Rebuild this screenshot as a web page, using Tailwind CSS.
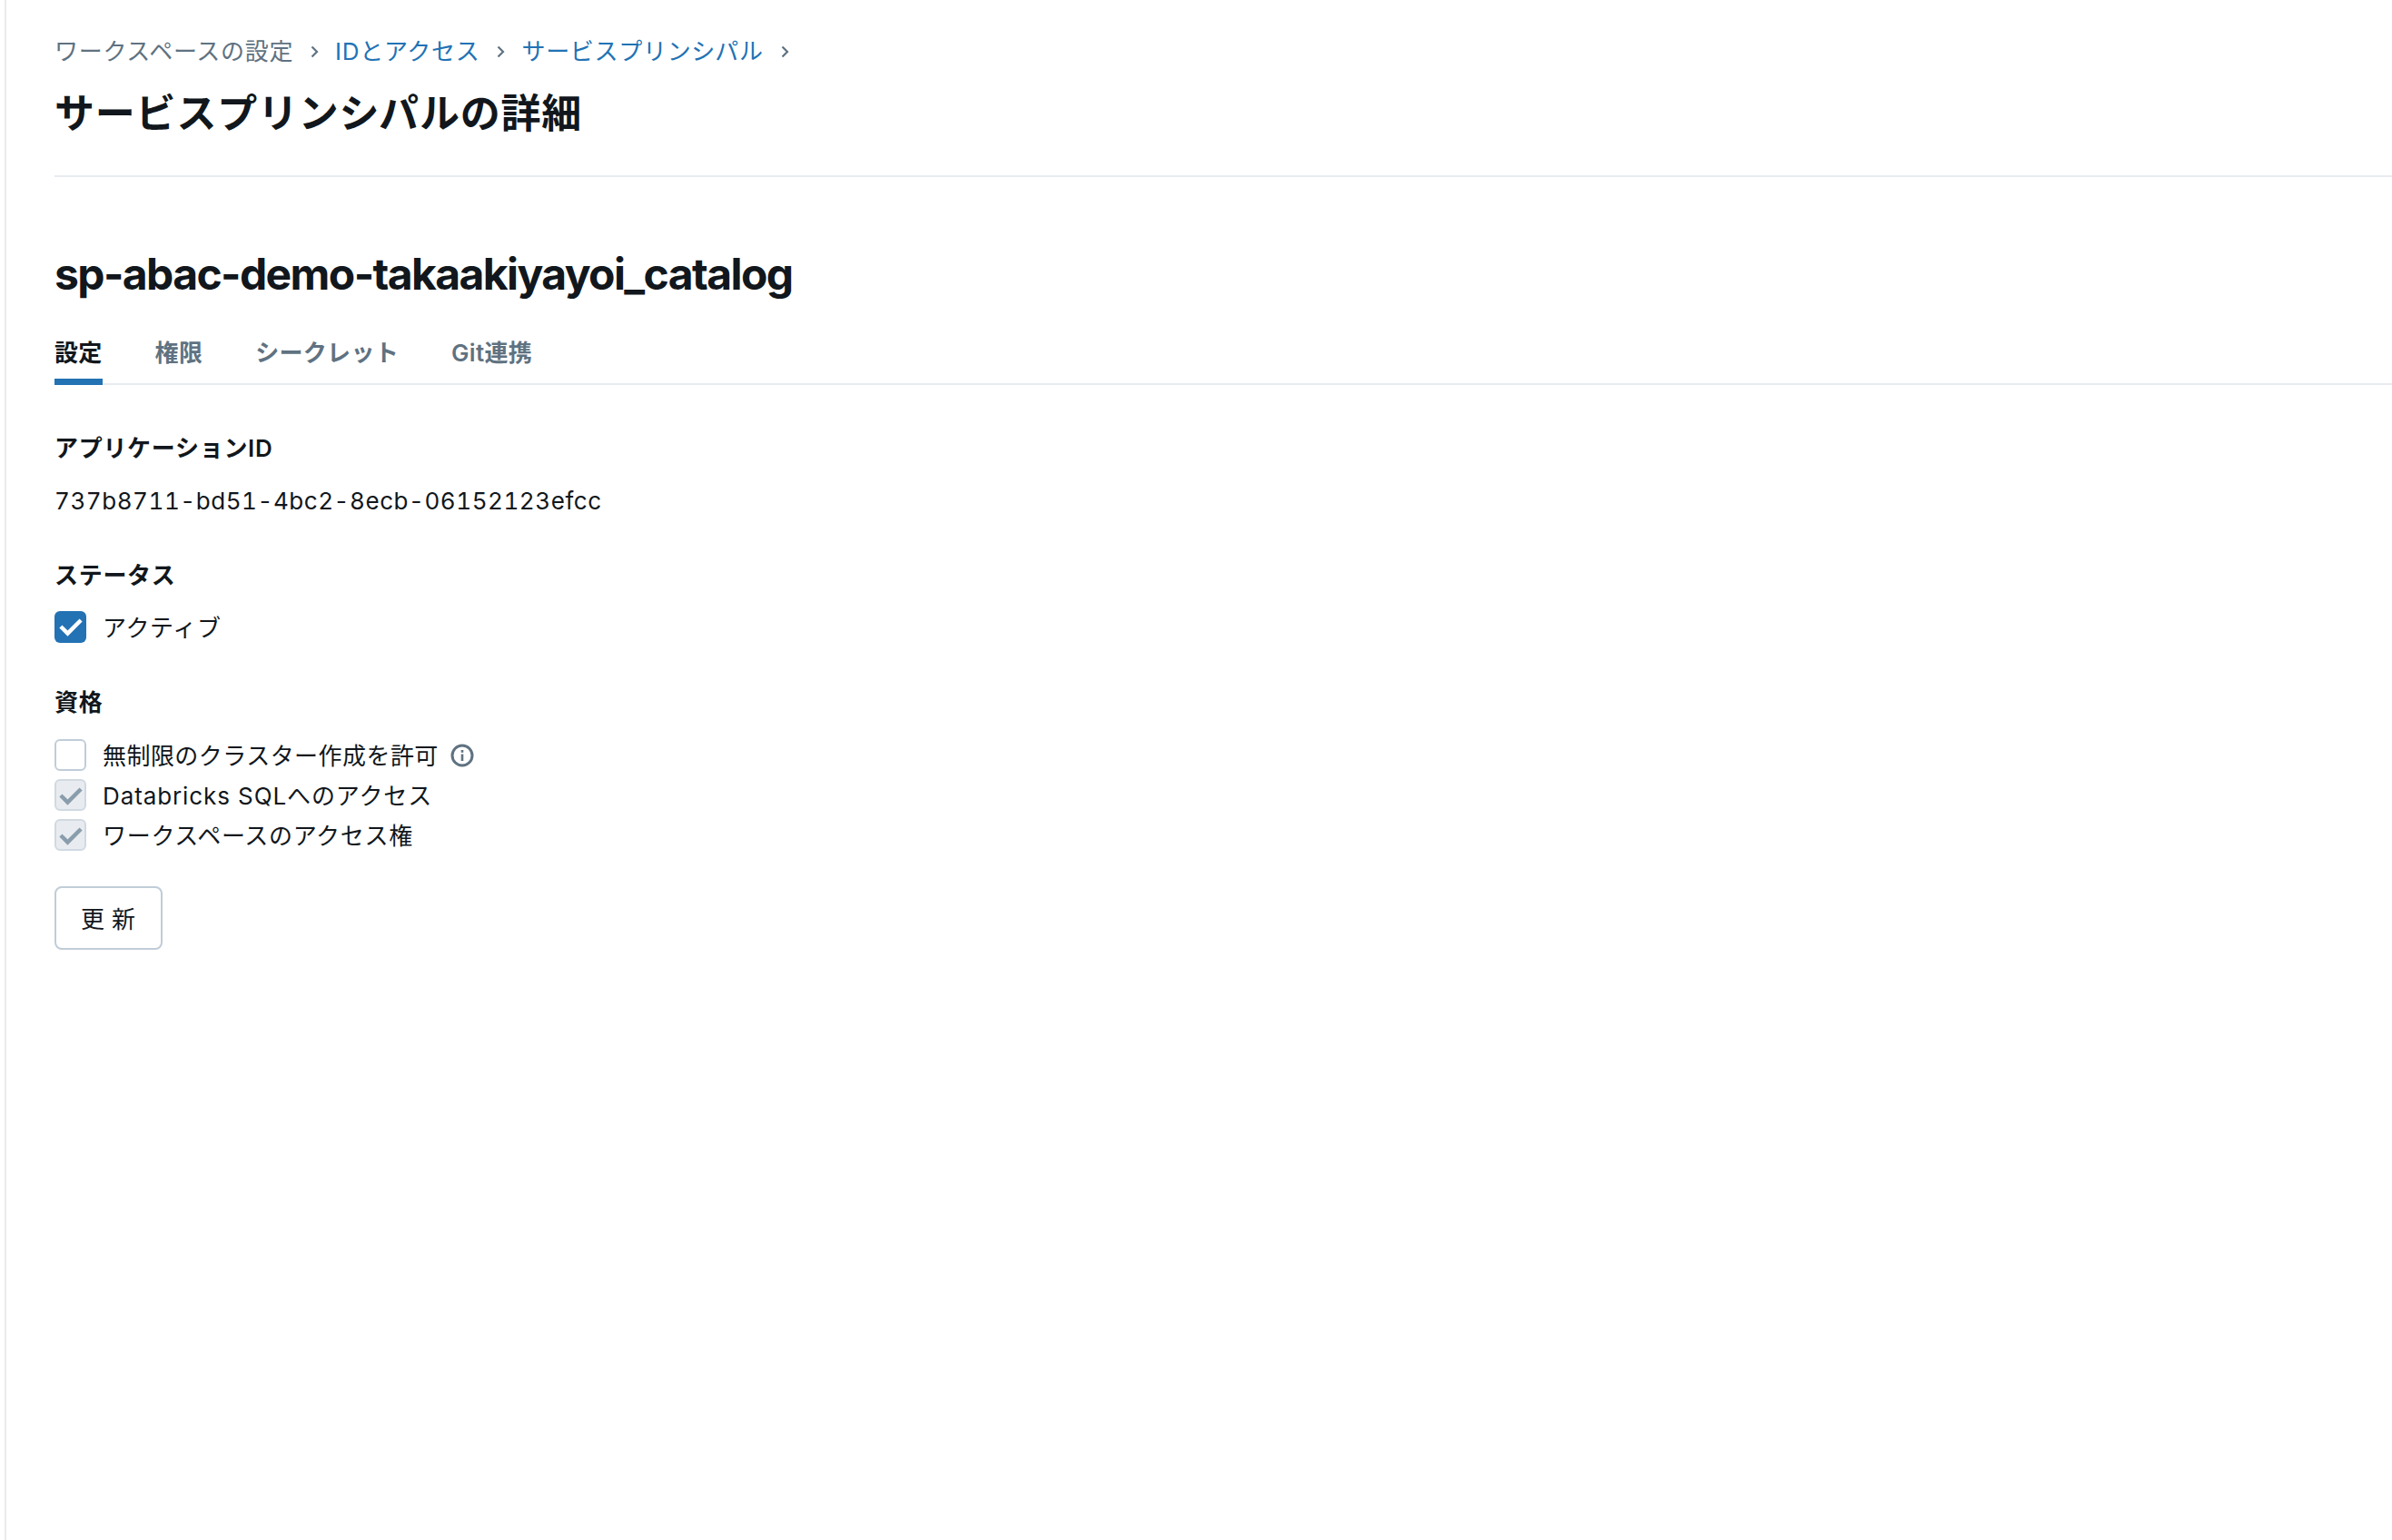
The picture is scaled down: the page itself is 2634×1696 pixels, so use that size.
<!DOCTYPE html>
<html lang="ja">
<head>
    <meta charset="UTF-8">
    <title>サービスプリンシパルの詳細</title>
    <script src="https://cdn.jsdelivr.net/npm/@tailwindcss/browser@4"></script>
</head>
<body class="bg-white text-[#11171c] font-['Inter','Noto_Sans_CJK_JP',sans-serif] text-[26px] tracking-[0.7px]">
    <div class="ml-[5px] min-h-screen border-l-[2px] border-[#e8ecf0] pl-[53px]">
        <!-- breadcrumb + page title -->
        <nav class="flex items-center pt-[38px] h-[76px] leading-[38px]">
            <span class="text-[#5f7281]">ワークスペースの設定</span>
            <svg class="mx-[13px] w-[20px] h-[20px] text-[#5f7281]" viewBox="0 0 20 20" fill="none" stroke="currentColor" stroke-width="2.200"><path d="M7.500 4.500 13 10l-5.500 5.500"/></svg>
            <span class="text-[#2272b4]">IDとアクセス</span>
            <svg class="mx-[13px] w-[20px] h-[20px] text-[#5f7281]" viewBox="0 0 20 20" fill="none" stroke="currentColor" stroke-width="2.200"><path d="M7.500 4.500 13 10l-5.500 5.500"/></svg>
            <span class="text-[#2272b4]">サービスプリンシパル</span>
            <svg class="mx-[13px] w-[20px] h-[20px] text-[#5f7281]" viewBox="0 0 20 20" fill="none" stroke="currentColor" stroke-width="2.200"><path d="M7.500 4.500 13 10l-5.500 5.500"/></svg>
        </nav>
        <h1 class="mt-[18px] text-[44px] leading-[62px] font-semibold tracking-[0.8px]">サービスプリンシパルの詳細</h1>
        <div class="mt-[37px] border-t-[2px] border-[#e8ecf0]"></div>

        <h2 class="mt-[75px] text-[48px] leading-[64px] font-bold tracking-[-1.6px]">sp-abac-demo-takaakiyayoi_catalog</h2>

        <!-- tabs -->
        <div class="mt-[28px] flex gap-[58px] border-b-[2px] border-[#e8ecf0] text-[#5f7281] font-semibold tracking-[0.3px]">
            <div class="-mb-[2px] h-[62px] border-b-[7px] border-[#2272b4] text-[#11171c] leading-[54px]">設定</div>
            <div class="leading-[54px]">権限</div>
            <div class="leading-[54px]">シークレット</div>
            <div class="leading-[54px]">Git連携</div>
        </div>

        <div class="mt-[51px] font-semibold leading-[38px]">アプリケーションID</div>
        <div class="mt-[20px] leading-[38px] tabular-nums tracking-[0.55px]">737b8711-bd51-4bc2-8ecb-06152123efcc</div>

        <div class="mt-[44px] font-semibold leading-[38px]">ステータス</div>
        <label class="mt-[19px] flex items-center gap-[18px] h-[36px]">
            <span class="flex items-center justify-center w-[35px] h-[35px] rounded-[6px] bg-[#2272b4]">
                <svg class="w-[28px] h-[28px]" viewBox="0 0 24 24" fill="none" stroke="#fff" stroke-width="3.800"><path d="M2.500 12l6.500 6.500L21.500 6"/></svg>
            </span>
            <span class="pt-[2px]">アクティブ</span>
        </label>

        <div class="mt-[47px] font-semibold leading-[38px]">資格</div>
        <div class="mt-[21px] flex flex-col gap-[9px]">
            <label class="flex items-center gap-[18px] h-[35px]">
                <span class="w-[35px] h-[35px] rounded-[6px] border-[2px] border-[#c0cdd8] bg-white"></span>
                <span class="pt-[2px] tracking-[0.45px]">無制限のクラスター作成を許可</span>
                <svg class="-ml-[5px] w-[26px] h-[26px] text-[#5f7281]" viewBox="0 0 26 26" fill="none">
                    <circle cx="13" cy="13" r="11" stroke="currentColor" stroke-width="3"/>
                    <rect x="11.700" y="11.500" width="2.600" height="7.500" fill="currentColor"/>
                    <rect x="11.700" y="7" width="2.600" height="2.800" fill="currentColor"/>
                </svg>
            </label>
            <label class="flex items-center gap-[18px] h-[35px]">
                <span class="flex items-center justify-center w-[35px] h-[35px] rounded-[6px] border-[2px] border-[#d1d9e1] bg-[#e8ecf0]">
                    <svg class="w-[28px] h-[28px] shrink-0" viewBox="0 0 24 24" fill="none" stroke="#8a9dac" stroke-width="3.800"><path d="M2.500 12l6.500 6.500L21.500 6"/></svg>
                </span>
                <span class="pt-[2px] tracking-[0.9px]">Databricks SQLへのアクセス</span>
            </label>
            <label class="flex items-center gap-[18px] h-[35px]">
                <span class="flex items-center justify-center w-[35px] h-[35px] rounded-[6px] border-[2px] border-[#d1d9e1] bg-[#e8ecf0]">
                    <svg class="w-[28px] h-[28px] shrink-0" viewBox="0 0 24 24" fill="none" stroke="#8a9dac" stroke-width="3.800"><path d="M2.500 12l6.500 6.500L21.500 6"/></svg>
                </span>
                <span class="pt-[2px]">ワークスペースのアクセス権</span>
            </label>
        </div>

        <button class="mt-[39px] w-[119px] h-[70px] rounded-[8px] border-[2px] border-[#c0cdd8] bg-white tracking-[8px] pl-[7px] pt-[2px]">更新</button>
    </div>
</body>
</html>
